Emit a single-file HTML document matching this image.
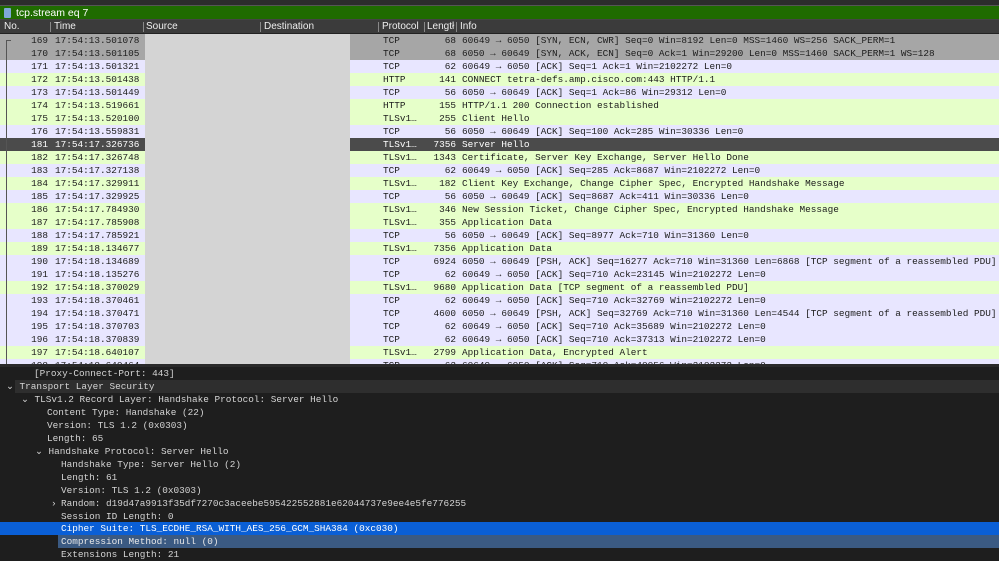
<!DOCTYPE html>
<html><head><meta charset="utf-8"><style>
*{margin:0;padding:0;box-sizing:border-box}
body{width:999px;height:554px;overflow:hidden;background:#1e1e1e;position:relative;font-family:"Liberation Mono",monospace;font-size:9.4px}
.top{position:absolute;left:0;top:0;width:999px;height:5px;background:#2c2c2c}
.filter{position:absolute;left:0;top:5px;width:999px;height:15px;background:#1f6b00;border-top:1px solid #555;border-bottom:1px solid #444}
.filter .bk{position:absolute;left:4px;top:2px;width:7px;height:10px;background:#7fa8d8;border-radius:1px}
.filter .t{position:absolute;left:16px;top:0px;font-family:"Liberation Sans",sans-serif;font-size:10.5px;color:#fff;line-height:14px}
.hdr{position:absolute;left:0;top:20px;width:999px;height:14px;background:#3b3b3b;border-bottom:1px solid #222;font-family:"Liberation Sans",sans-serif;font-size:10px;color:#eee;line-height:14px}
.hdr span{position:absolute;top:0}
.hdr i{position:absolute;top:2px;width:1px;height:10px;background:#888}
.list{position:absolute;left:0;top:34px;width:999px;height:330px;overflow:hidden;background:#fff}
.r{position:relative;height:13px;line-height:13px;color:#1c1c1c;white-space:pre}
.r span{position:absolute;top:0}
.t0{background:#e8e6ff}.h{background:#e6ffc9}.g{background:#a6a6a6}.s{background:#4b4b4b;color:#fff}
.n{left:0;width:48px;text-align:right}.tm{left:55px}.p{left:383px}.l{left:400px;width:56px;text-align:right}.i{left:462px}
.red{position:absolute;left:145px;top:34px;width:205px;height:330px;background:#d4d4d4}
.bar{position:absolute;left:6px;top:40px;width:1px;height:324px;background:#555}
.bar2{position:absolute;left:6px;top:40px;width:5px;height:1px;background:#555}
.sep{position:absolute;left:0;top:364px;width:999px;height:3px;background:#2a2a2a}
.det{position:absolute;left:0;top:367px;width:999px;height:187px;background:#1e1e1e;color:#d4d4d4}
.d{position:absolute;height:13px;line-height:13px;white-space:pre}
</style></head><body>
<div class="top"></div>
<div class="filter"><div class="bk"></div><div class="t">tcp.stream eq 7</div></div>
<div class="hdr"><span style="left:4px">No.</span><i style="left:50px"></i><span style="left:54px">Time</span><i style="left:143px"></i><span style="left:146px">Source</span><i style="left:260px"></i><span style="left:264px">Destination</span><i style="left:378px"></i><span style="left:382px">Protocol</span><i style="left:424px"></i><span style="left:427px">Lengtł</span><i style="left:456px"></i><span style="left:460px">Info</span></div>
<div class="list">
<div class="r g"><span class="n">169</span><span class="tm">17:54:13.501078</span><span class="p">TCP</span><span class="l">68</span><span class="i">60649 → 6050 [SYN, ECN, CWR] Seq=0 Win=8192 Len=0 MSS=1460 WS=256 SACK_PERM=1</span></div>
<div class="r g"><span class="n">170</span><span class="tm">17:54:13.501105</span><span class="p">TCP</span><span class="l">68</span><span class="i">6050 → 60649 [SYN, ACK, ECN] Seq=0 Ack=1 Win=29200 Len=0 MSS=1460 SACK_PERM=1 WS=128</span></div>
<div class="r t0"><span class="n">171</span><span class="tm">17:54:13.501321</span><span class="p">TCP</span><span class="l">62</span><span class="i">60649 → 6050 [ACK] Seq=1 Ack=1 Win=2102272 Len=0</span></div>
<div class="r h"><span class="n">172</span><span class="tm">17:54:13.501438</span><span class="p">HTTP</span><span class="l">141</span><span class="i">CONNECT tetra-defs.amp.cisco.com:443 HTTP/1.1</span></div>
<div class="r t0"><span class="n">173</span><span class="tm">17:54:13.501449</span><span class="p">TCP</span><span class="l">56</span><span class="i">6050 → 60649 [ACK] Seq=1 Ack=86 Win=29312 Len=0</span></div>
<div class="r h"><span class="n">174</span><span class="tm">17:54:13.519661</span><span class="p">HTTP</span><span class="l">155</span><span class="i">HTTP/1.1 200 Connection established</span></div>
<div class="r h"><span class="n">175</span><span class="tm">17:54:13.520100</span><span class="p">TLSv1…</span><span class="l">255</span><span class="i">Client Hello</span></div>
<div class="r t0"><span class="n">176</span><span class="tm">17:54:13.559831</span><span class="p">TCP</span><span class="l">56</span><span class="i">6050 → 60649 [ACK] Seq=100 Ack=285 Win=30336 Len=0</span></div>
<div class="r s"><span class="n">181</span><span class="tm">17:54:17.326736</span><span class="p">TLSv1…</span><span class="l">7356</span><span class="i">Server Hello</span></div>
<div class="r h"><span class="n">182</span><span class="tm">17:54:17.326748</span><span class="p">TLSv1…</span><span class="l">1343</span><span class="i">Certificate, Server Key Exchange, Server Hello Done</span></div>
<div class="r t0"><span class="n">183</span><span class="tm">17:54:17.327138</span><span class="p">TCP</span><span class="l">62</span><span class="i">60649 → 6050 [ACK] Seq=285 Ack=8687 Win=2102272 Len=0</span></div>
<div class="r h"><span class="n">184</span><span class="tm">17:54:17.329911</span><span class="p">TLSv1…</span><span class="l">182</span><span class="i">Client Key Exchange, Change Cipher Spec, Encrypted Handshake Message</span></div>
<div class="r t0"><span class="n">185</span><span class="tm">17:54:17.329925</span><span class="p">TCP</span><span class="l">56</span><span class="i">6050 → 60649 [ACK] Seq=8687 Ack=411 Win=30336 Len=0</span></div>
<div class="r h"><span class="n">186</span><span class="tm">17:54:17.784930</span><span class="p">TLSv1…</span><span class="l">346</span><span class="i">New Session Ticket, Change Cipher Spec, Encrypted Handshake Message</span></div>
<div class="r h"><span class="n">187</span><span class="tm">17:54:17.785908</span><span class="p">TLSv1…</span><span class="l">355</span><span class="i">Application Data</span></div>
<div class="r t0"><span class="n">188</span><span class="tm">17:54:17.785921</span><span class="p">TCP</span><span class="l">56</span><span class="i">6050 → 60649 [ACK] Seq=8977 Ack=710 Win=31360 Len=0</span></div>
<div class="r h"><span class="n">189</span><span class="tm">17:54:18.134677</span><span class="p">TLSv1…</span><span class="l">7356</span><span class="i">Application Data</span></div>
<div class="r t0"><span class="n">190</span><span class="tm">17:54:18.134689</span><span class="p">TCP</span><span class="l">6924</span><span class="i">6050 → 60649 [PSH, ACK] Seq=16277 Ack=710 Win=31360 Len=6868 [TCP segment of a reassembled PDU]</span></div>
<div class="r t0"><span class="n">191</span><span class="tm">17:54:18.135276</span><span class="p">TCP</span><span class="l">62</span><span class="i">60649 → 6050 [ACK] Seq=710 Ack=23145 Win=2102272 Len=0</span></div>
<div class="r h"><span class="n">192</span><span class="tm">17:54:18.370029</span><span class="p">TLSv1…</span><span class="l">9680</span><span class="i">Application Data [TCP segment of a reassembled PDU]</span></div>
<div class="r t0"><span class="n">193</span><span class="tm">17:54:18.370461</span><span class="p">TCP</span><span class="l">62</span><span class="i">60649 → 6050 [ACK] Seq=710 Ack=32769 Win=2102272 Len=0</span></div>
<div class="r t0"><span class="n">194</span><span class="tm">17:54:18.370471</span><span class="p">TCP</span><span class="l">4600</span><span class="i">6050 → 60649 [PSH, ACK] Seq=32769 Ack=710 Win=31360 Len=4544 [TCP segment of a reassembled PDU]</span></div>
<div class="r t0"><span class="n">195</span><span class="tm">17:54:18.370703</span><span class="p">TCP</span><span class="l">62</span><span class="i">60649 → 6050 [ACK] Seq=710 Ack=35689 Win=2102272 Len=0</span></div>
<div class="r t0"><span class="n">196</span><span class="tm">17:54:18.370839</span><span class="p">TCP</span><span class="l">62</span><span class="i">60649 → 6050 [ACK] Seq=710 Ack=37313 Win=2102272 Len=0</span></div>
<div class="r h"><span class="n">197</span><span class="tm">17:54:18.640107</span><span class="p">TLSv1…</span><span class="l">2799</span><span class="i">Application Data, Encrypted Alert</span></div>
<div class="r t0"><span class="n">198</span><span class="tm">17:54:18.640464</span><span class="p">TCP</span><span class="l">62</span><span class="i">60649 → 6050 [ACK] Seq=710 Ack=40056 Win=2102272 Len=0</span></div>
</div>
<div class="red"></div>
<div class="bar"></div><div class="bar2"></div>
<div class="sep"></div>
<div class="det">
<div class="d" style="left:34px;top:0">[Proxy-Connect-Port: 443]</div>
<div class="d" style="left:15px;top:13px;width:984px;background:#2e2e2e"></div>
<div class="d" style="left:6px;top:13px">⌄ Transport Layer Security</div>
<div class="d" style="left:21px;top:26px">⌄ TLSv1.2 Record Layer: Handshake Protocol: Server Hello</div>
<div class="d" style="left:47px;top:39px">Content Type: Handshake (22)</div>
<div class="d" style="left:47px;top:52px">Version: TLS 1.2 (0x0303)</div>
<div class="d" style="left:47px;top:65px">Length: 65</div>
<div class="d" style="left:35px;top:78px">⌄ Handshake Protocol: Server Hello</div>
<div class="d" style="left:61px;top:91px">Handshake Type: Server Hello (2)</div>
<div class="d" style="left:61px;top:104px">Length: 61</div>
<div class="d" style="left:61px;top:117px">Version: TLS 1.2 (0x0303)</div>
<div class="d" style="left:51px;top:130px">›</div>
<div class="d" style="left:61px;top:130px">Random: d19d47a9913f35df7270c3aceebe595422552881e62044737e9ee4e5fe776255</div>
<div class="d" style="left:61px;top:143px">Session ID Length: 0</div>
<div class="d" style="left:0;top:155px;width:999px;background:#0a5fd6;color:#fff;padding-left:61px">Cipher Suite: TLS_ECDHE_RSA_WITH_AES_256_GCM_SHA384 (0xc030)</div>
<div class="d" style="left:58px;top:168px;width:941px;background:#3b5a82;color:#e8e8e8;padding-left:3px">Compression Method: null (0)</div>
<div class="d" style="left:61px;top:181px">Extensions Length: 21</div>
</div>
</body></html>
